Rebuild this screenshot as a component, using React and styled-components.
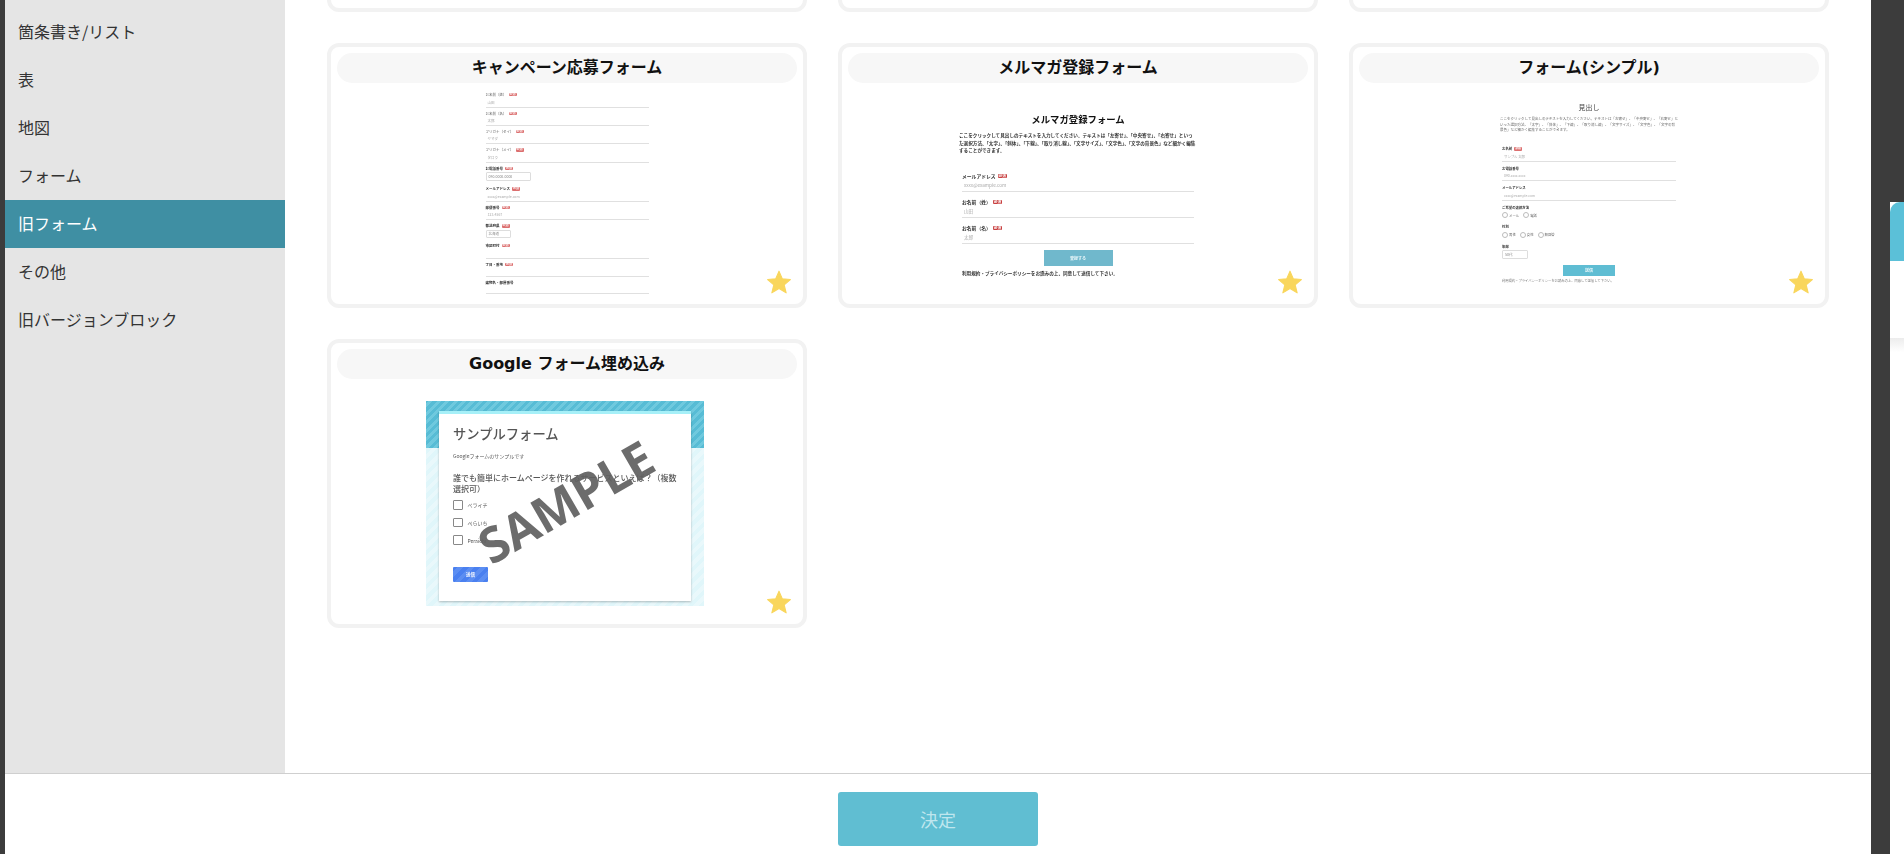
import React from 'react'
import styled, { createGlobalStyle } from 'styled-components'

const GlobalStyle = createGlobalStyle`
  html, body {
    margin: 0;
    padding: 0;
    height: 100%;
    overflow: hidden;
    background: #3c3c3c;
  }
  * {
    box-sizing: border-box;
  }
  body {
    font-family: "DejaVu Sans", "Noto Sans CJK JP", sans-serif;
    color: #333;
  }
`

const Page = styled.div`
  display: flex;
  width: 1904px;
  height: 854px;
  padding-left: 5px;
  background: #3c3c3c;
  overflow: hidden;
`

const Modal = styled.div`
  display: flex;
  flex-direction: column;
  width: 1866px;
  height: 854px;
  background: #fff;
  flex-shrink: 0;
`

const ModalBody = styled.div`
  display: flex;
  flex: 1;
  min-height: 0;
`

const Sidebar = styled.ul`
  width: 280px;
  margin: 0;
  padding: 8px 0 0;
  list-style: none;
  background: #e5e5e5;
  flex-shrink: 0;
`

const SideItem = styled.li`
  height: 48px;
  padding-left: 13px;
  line-height: 46px;
  font-family: "Noto Sans CJK JP", sans-serif;
  font-size: 16px;
  color: ${props => (props.$active ? '#fff' : '#333')};
  background: ${props => (props.$active ? '#3f8fa3' : 'transparent')};
`

const Content = styled.div`
  flex: 1;
  min-width: 0;
  overflow: hidden;
`

// the list is scrolled, so the first row only shows its lower edge
const CardGrid = styled.div`
  display: grid;
  grid-template-columns: repeat(3, 480px);
  column-gap: 31px;
  row-gap: 31px;
  margin: -253px 0 0 42px;
`

const Card = styled.div`
  position: relative;
  display: flex;
  flex-direction: column;
  height: ${props => props.$height || 265}px;
  padding: 6px 6px 0;
  background: #fff;
  border: 4px solid #f2f2f2;
  border-radius: 12px;
`

const CardTitle = styled.div`
  height: 30px;
  flex-shrink: 0;
  border-radius: 15px;
  background: #f7f7f7;
  font-family: "DejaVu Sans", "Noto Sans CJK JP", sans-serif;
  font-size: 16px;
  font-weight: 700;
  line-height: 30px;
  text-align: center;
  color: #111;
`

const Favorite = styled.svg`
  position: absolute;
  right: 11px;
  bottom: 9px;
  width: 26px;
  height: 26px;
`

const Thumb = styled.div`
  flex: 1;
  display: flex;
  flex-direction: column;
  align-items: center;
  min-height: 0;
  overflow: hidden;
  filter: blur(0.65px);
  font-family: "Noto Sans CJK JP", sans-serif;
`

const FormColumn = styled.div`
  display: flex;
  flex-direction: column;
  width: ${props => props.$width}px;
  padding-top: ${props => props.$top}px;
`

const Field = styled.div`
  display: flex;
  flex-direction: column;
  height: ${props => props.$height}px;
  padding: ${props => props.$pad || 0}px ${props => props.$side || 0}px 0;
`

const FieldLabel = styled.div`
  display: flex;
  align-items: center;
  gap: 2px;
  height: ${props => props.$size + 2}px;
  flex-shrink: 0;
  font-size: ${props => props.$size}px;
  font-weight: ${props => (props.$bold ? 700 : 400)};
  line-height: 1;
  white-space: nowrap;
  color: ${props => (props.$bold ? '#333' : '#666')};
`

const Required = styled.span`
  padding: 0 1px;
  border-radius: 1px;
  font-size: ${props => props.$size}px;
  font-weight: 700;
  line-height: 1.1;
  color: #fff;
  background: ${props => props.$color || '#dc6f6f'};
`

const Underlined = styled.div`
  display: flex;
  justify-content: space-between;
  align-items: center;
  flex: 1;
  padding: 0 2px;
  border-bottom: 1px solid #e0e0e0;
  font-size: ${props => props.$size}px;
  color: #aaa;
`

const BoxInput = styled.div`
  display: flex;
  justify-content: space-between;
  align-items: center;
  width: ${props => props.$width}px;
  height: ${props => props.$height}px;
  margin-top: 1px;
  padding: 0 2px;
  border: 1px solid #ddd;
  border-radius: 1px;
  font-size: 3.5px;
  color: #888;
`

const OptionRow = styled.div`
  display: flex;
  align-items: center;
  gap: 4px;
  flex: 1;
  font-size: 3.4px;
  color: #666;
`

const Option = styled.span`
  display: flex;
  align-items: center;
  gap: 1px;
  &::before {
    content: '';
    width: 4px;
    height: 4px;
    border: 0.5px solid #bbb;
    border-radius: 50%;
  }
`

const MiniHeading = styled.div`
  font-size: ${props => props.$size}px;
  font-weight: ${props => (props.$bold ? 700 : 400)};
  line-height: ${props => props.$line}px;
  text-align: center;
  color: ${props => props.$color || '#111'};
`

const MiniText = styled.p`
  width: ${props => props.$width}px;
  margin: ${props => props.$margin};
  font-size: ${props => props.$size}px;
  font-weight: ${props => (props.$bold ? 700 : 400)};
  line-height: ${props => props.$line}px;
  color: ${props => props.$color};
`

const MiniButton = styled.div`
  align-self: center;
  width: ${props => props.$width}px;
  height: ${props => props.$height}px;
  margin-top: ${props => props.$top}px;
  background: ${props => props.$color};
  font-size: 4px;
  font-weight: 700;
  line-height: ${props => props.$height}px;
  text-align: center;
  color: #e8f6f9;
`

const GoogleShot = styled.div`
  position: relative;
  flex-shrink: 0;
  width: 278px;
  height: 205px;
  margin: 22px 4px 0 0;
  padding: 10px 13px 5px;
  background: repeating-linear-gradient(-45deg, #e0f6fa 0 4px, #e9f8fb 4px 8px);
  &::before {
    content: '';
    position: absolute;
    top: 0;
    left: 0;
    right: 0;
    height: 47px;
    background: repeating-linear-gradient(-45deg, #57bcd5 0 3px, #6fc9de 3px 6px);
  }
`

const GoogleSheet = styled.div`
  position: relative;
  display: flex;
  flex-direction: column;
  height: 100%;
  padding: 10px 14px 0;
  background: #fff;
  border-top: 3px solid #a6f0f8;
  box-shadow: 0 1px 2px rgba(0, 0, 0, 0.25);
`

const GoogleTitle = styled.div`
  font-size: 13.3px;
  font-weight: 500;
  line-height: 20px;
  color: #555;
`

const GoogleSub = styled.div`
  margin-top: 8px;
  font-size: 5px;
  line-height: 7px;
  color: #555;
`

const GoogleQuestion = styled.div`
  margin-top: 13px;
  font-size: 8px;
  font-weight: 500;
  line-height: 11px;
  color: #555;
`

const GoogleChoice = styled.div`
  display: flex;
  align-items: center;
  gap: 5px;
  height: 17.7px;
  font-size: 5px;
  color: #555;
  &::before {
    content: '';
    width: 7.5px;
    height: 7.5px;
    border: 1px solid #888;
    border-radius: 1px;
  }
`

const GoogleChoices = styled.div`
  margin-top: 2px;
`

const GoogleSend = styled.div`
  width: 35px;
  height: 15px;
  margin-top: 18px;
  border-radius: 1px;
  background: repeating-linear-gradient(-45deg, #4a80f0 0 4px, #5c8ef2 4px 8px);
  font-size: 4.5px;
  font-weight: 700;
  line-height: 15px;
  text-align: center;
  color: #fff;
`

const SampleMark = styled.div`
  position: absolute;
  top: 70px;
  left: 43px;
  font-family: "Open Sans", sans-serif;
  font-size: 49px;
  font-weight: 700;
  line-height: 60px;
  color: rgba(95, 95, 95, 0.92);
  transform: rotate(-30deg);
`

const Footer = styled.div`
  display: flex;
  justify-content: center;
  align-items: flex-start;
  height: 81px;
  flex-shrink: 0;
  padding-top: 18px;
  border-top: 1px solid #cfcfcf;
  background: #fff;
`

const SubmitButton = styled.button`
  width: 200px;
  height: 54px;
  border: 0;
  border-radius: 3px;
  background: #60bed2;
  font-family: "Noto Sans CJK JP", sans-serif;
  font-size: 18px;
  color: #bfe6ee;
`

const Gutter = styled.div`
  width: 19px;
  flex-shrink: 0;
`

const SidePanel = styled.div`
  flex: 1;
  margin-top: 202px;
  background: #fff;
`

const SideTab = styled.div`
  height: 59px;
  border-radius: 10px 0 0 0;
  background: #5bc0d8;
`

const SideFade = styled.div`
  height: 14px;
  margin-top: 77px;
  background: linear-gradient(#ececec, #fff);
`

const menu = ['箇条書き/リスト', '表', '地図', 'フォーム', '旧フォーム', 'その他', '旧バージョンブロック']

const campaignFields = [
  { label: 'お名前（姓）', hint: '山田', height: 18.6 },
  { label: 'お名前（名）', hint: '太郎', height: 18.3 },
  { label: 'フリガナ（セイ）', hint: 'ヤマダ', height: 18.35 },
  { label: 'フリガナ（メイ）', hint: 'タロウ', height: 18.35 },
  { label: 'お電話番号', bold: true, box: '090-0000-0000', boxWidth: 45, boxHeight: 9, height: 20.7 },
  { label: 'メールアドレス', bold: true, hint: 'xxxx@example.com', height: 18.7 },
  { label: '郵便番号', bold: true, hint: '123-4567', height: 18.3 },
  { label: '都道府県', bold: true, box: '北海道', boxWidth: 25, boxHeight: 8, height: 19.7 },
  { label: '市区町村', bold: true, height: 18.6 },
  { label: '丁目・番地', bold: true, height: 18.4 },
  { label: '建物名・部屋番号', bold: true, noBadge: true, height: 17.5 }
]

const mailFields = [
  { label: 'メールアドレス', hint: 'xxxx@example.com' },
  { label: 'お名前（姓）', hint: '山田' },
  { label: 'お名前（名）', hint: '太郎' }
]

const introText = 'ここをクリックして見出しのテキストを入力してください。テキストは「左寄せ」、「中央寄せ」、「右寄せ」といった選択方法、「太字」、「斜体」、「下線」、「取り消し線」、「文字サイズ」、「文字色」、「文字の背景色」など細かく編集することができます。'

const Star = () => (
  <Favorite viewBox='0 0 24 24'>
    <polygon
      points='12,2 15,9 22.5,9.7 16.8,14.6 18.6,22 12,18 5.4,22 7.2,14.6 1.5,9.7 9,9'
      fill='#f9d65c'
      stroke='#f9d65c'
      strokeLinejoin='round' />
  </Favorite>
)

const CampaignThumb = () => (
  <Thumb>
    <FormColumn $width={163} $top={6}>
      {campaignFields.map(field => (
        <Field key={field.label} $height={field.height} $pad={3}>
          <FieldLabel $size={3.5} $bold={field.bold}>
            {field.label}
            {!field.noBadge && <Required $size={3}>必須</Required>}
          </FieldLabel>
          {field.box
            ? <BoxInput $width={field.boxWidth} $height={field.boxHeight}>{field.box}</BoxInput>
            : <Underlined $size={3.5}>{field.hint}</Underlined>}
        </Field>
      ))}
    </FormColumn>
  </Thumb>
)

const MailThumb = () => (
  <Thumb>
    <FormColumn $width={238} $top={30}>
      <MiniHeading $size={9.4} $bold $line={12}>メルマガ登録フォーム</MiniHeading>
      <MiniText $width={238} $margin='7px 0 11px' $size={4.6} $bold $line={7.6} $color='#333'>
        {introText}
      </MiniText>
      {mailFields.map(field => (
        <Field key={field.label} $height={26} $pad={7} $side={3}>
          <FieldLabel $size={4.8} $bold>
            {field.label}
            <Required $size={3.6} $color='#c84040'>必須</Required>
          </FieldLabel>
          <Underlined $size={4.6}>{field.hint}</Underlined>
        </Field>
      ))}
      <MiniButton $width={69} $height={16} $top={6} $color='#70b8cc'>登録する</MiniButton>
      <MiniText $width={238} $margin='3px 0 0 3px' $size={4.6} $bold $line={8} $color='#333'>
        利用規約・プライバシーポリシーをお読みの上、同意して送信して下さい。
      </MiniText>
    </FormColumn>
  </Thumb>
)

const SimpleThumb = () => (
  <Thumb>
    <FormColumn $width={178} $top={19}>
      <MiniHeading $size={7} $line={10} $color='#444'>見出し</MiniHeading>
      <MiniText $width={178} $margin='4px 0 9.5px' $size={3.5} $line={5.6} $color='#666'>
        {introText}
      </MiniText>
      <Field $height={19.5} $pad={4} $side={2}>
        <FieldLabel $size={3.4} $bold>お名前<Required $size={2.8}>必須</Required></FieldLabel>
        <Underlined $size={3.4}>サンプル 太郎</Underlined>
      </Field>
      <Field $height={19.5} $pad={4} $side={2}>
        <FieldLabel $size={3.4} $bold>お電話番号</FieldLabel>
        <Underlined $size={3.4}>090-xxxx-xxxx</Underlined>
      </Field>
      <Field $height={19.5} $pad={4} $side={2}>
        <FieldLabel $size={3.4} $bold>メールアドレス</FieldLabel>
        <Underlined $size={3.4}>xxxx@example.com</Underlined>
      </Field>
      <Field $height={19.5} $pad={4} $side={2}>
        <FieldLabel $size={3.4} $bold>ご希望の連絡方法</FieldLabel>
        <OptionRow><Option>メール</Option><Option>電話</Option></OptionRow>
      </Field>
      <Field $height={19.5} $pad={4} $side={2}>
        <FieldLabel $size={3.4} $bold>性別</FieldLabel>
        <OptionRow><Option>男性</Option><Option>女性</Option><Option>無回答</Option></OptionRow>
      </Field>
      <Field $height={19.5} $pad={4} $side={2}>
        <FieldLabel $size={3.4} $bold>年齢</FieldLabel>
        <BoxInput $width={26} $height={10}>50代</BoxInput>
      </Field>
      <MiniButton $width={52} $height={11} $top={5.5} $color='#5fbdd3'>送信</MiniButton>
      <MiniText $width={178} $margin='2px 0 0 2px' $size={3.3} $line={6} $color='#777'>
        利用規約・プライバシーポリシーをお読みの上、同意して送信して下さい。
      </MiniText>
    </FormColumn>
  </Thumb>
)

const GoogleThumb = () => (
  <Thumb>
    <GoogleShot>
      <GoogleSheet>
        <GoogleTitle>サンプルフォーム</GoogleTitle>
        <GoogleSub>Googleフォームのサンプルです</GoogleSub>
        <GoogleQuestion>誰でも簡単にホームページを作れるサービスといえば？（複数選択可）</GoogleQuestion>
        <GoogleChoices>
          <GoogleChoice>ペライチ</GoogleChoice>
          <GoogleChoice>ぺらいち</GoogleChoice>
          <GoogleChoice>Peraichi</GoogleChoice>
        </GoogleChoices>
        <GoogleSend>送信</GoogleSend>
      </GoogleSheet>
      <SampleMark>SAMPLE</SampleMark>
    </GoogleShot>
  </Thumb>
)

export default function App () {
  return (
    <Page>
      <GlobalStyle />
      <Modal>
        <ModalBody>
          <Sidebar>
            {menu.map(name => (
              <SideItem key={name} $active={name === '旧フォーム'}>{name}</SideItem>
            ))}
          </Sidebar>
          <Content>
            <CardGrid>
              <Card />
              <Card />
              <Card />
              <Card>
                <CardTitle>キャンペーン応募フォーム</CardTitle>
                <CampaignThumb />
                <Star />
              </Card>
              <Card>
                <CardTitle>メルマガ登録フォーム</CardTitle>
                <MailThumb />
                <Star />
              </Card>
              <Card>
                <CardTitle>フォーム(シンプル)</CardTitle>
                <SimpleThumb />
                <Star />
              </Card>
              <Card $height={289}>
                <CardTitle>Google フォーム埋め込み</CardTitle>
                <GoogleThumb />
                <Star />
              </Card>
            </CardGrid>
          </Content>
        </ModalBody>
        <Footer>
          <SubmitButton>決定</SubmitButton>
        </Footer>
      </Modal>
      <Gutter />
      <SidePanel>
        <SideTab />
        <SideFade />
      </SidePanel>
    </Page>
  )
}
